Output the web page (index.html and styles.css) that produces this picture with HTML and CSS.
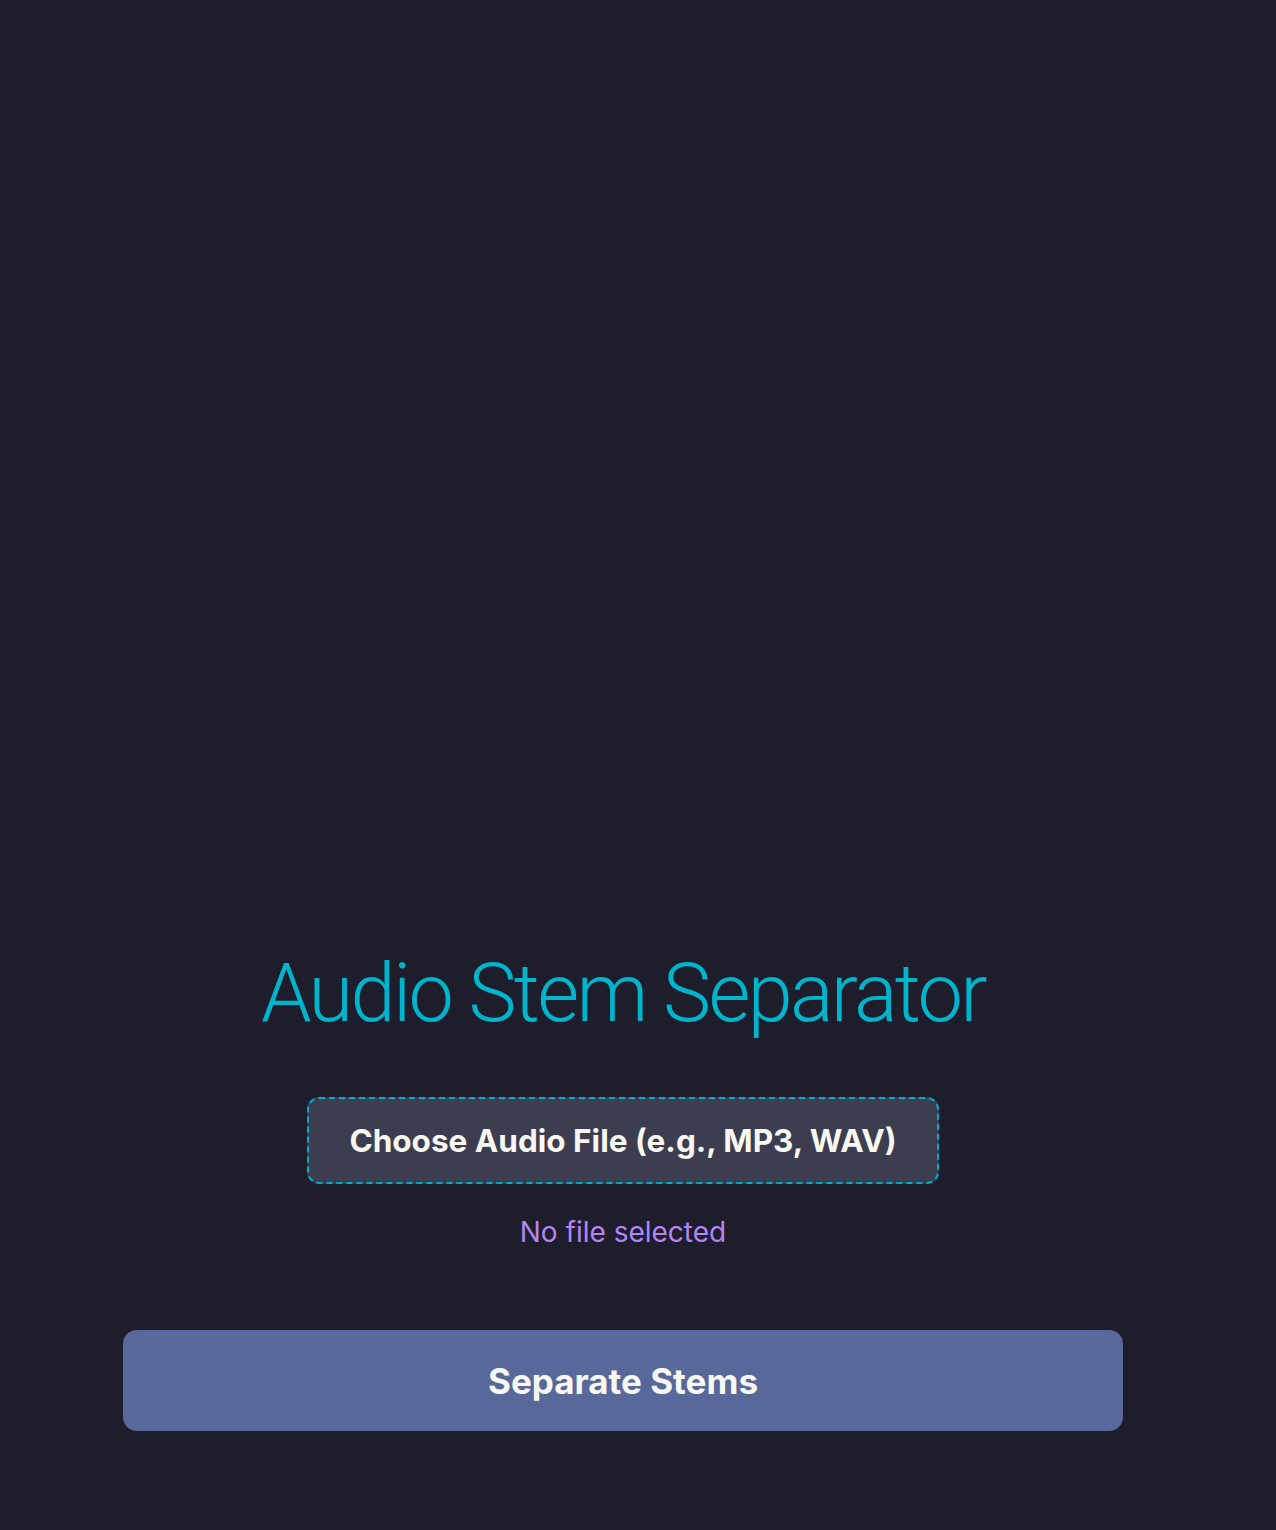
FILE: index.html
```html
<!DOCTYPE html>
<html lang="en">
<head>
<meta charset="utf-8">
<title>Audio Stem Separator</title>
<link rel="stylesheet" href="styles.css">
</head>
<body>
<main class="app">
  <h1 class="title">Audio Stem Separator</h1>
  <label class="file-picker">Choose Audio File (e.g., MP3, WAV)</label>
  <p class="file-name">No file selected</p>
  <button class="separate-btn">Separate Stems</button>
</main>
</body>
</html>
```

FILE: styles.css
```css
html, body {
  margin: 0;
  padding: 0;
  background: #1d1d2b;
  min-height: 1530px;
}
body {
  font-family: Inter, "Noto Sans", sans-serif;
  color: #f8f8f2;
}
.app {
  width: 1000px;
  margin-left: 123px;
  padding-top: 944px;
  display: flex;
  flex-direction: column;
  align-items: center;
}
.title {
  margin: 0;
  font-family: Roboto, Inter, sans-serif;
  font-size: 81px;
  font-weight: 300;
  line-height: 100px;
  color: #00b4cc;
  letter-spacing: -2.6px;
}
.file-picker {
  margin-top: 53px;
  box-sizing: border-box;
  width: 632px;
  height: 87px;
  display: flex;
  align-items: center;
  justify-content: center;
  background: #3d3d50;
  border: 2px dashed #00adc9;
  border-radius: 12px;
  font-size: 31.5px;
  font-weight: 700;
  color: #f8f8f2;
}
.file-name {
  margin: 28px 0 0;
  font-size: 28px;
  line-height: 40px;
  color: #b485f5;
}
.separate-btn {
  margin-top: 78px;
  width: 1000px;
  height: 101px;
  border: none;
  border-radius: 14px;
  background: #59689a;
  color: #f8f8f2;
  font-family: Inter, "Noto Sans", sans-serif;
  font-size: 35px;
  font-weight: 700;
}
```
